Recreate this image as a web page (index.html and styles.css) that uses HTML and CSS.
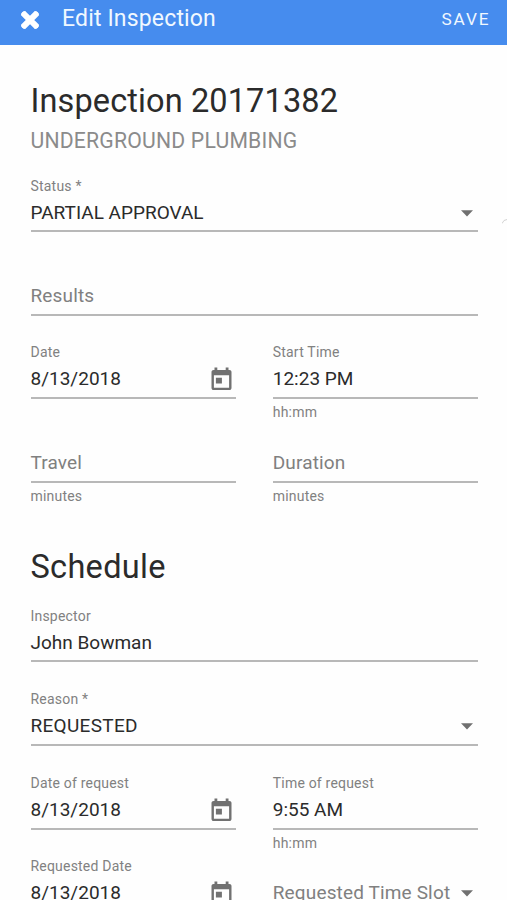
FILE: index.html
```html
<!DOCTYPE html>
<html lang="en">
<head>
<meta charset="utf-8">
<title>Edit Inspection</title>
<link rel="stylesheet" href="styles.css">
</head>
<body>
<svg class="defs" width="0" height="0" aria-hidden="true">
  <symbol id="calendar" viewBox="0 0 21 24"><path fill-rule="evenodd" d="M3.500 .5h2.800V3h8.400V.5h2.800V3h.9c1.300 0 2.100.9 2.100 2.100v15.900c0 1.200-.9 2.100-2.100 2.100H2.600C1.400 23.100.5 22.200.5 21V5.100C.5 3.900 1.400 3 2.600 3h.9zM2.900 8.200v12.500h15.200V8.200zM4.900 10.700h6v5.800h-6z"/></symbol>
  <symbol id="caret" viewBox="0 0 12 7"><path d="M0 .3h12L6 6.500z"/></symbol>
</svg>
<header class="bar">
  <svg class="close" viewBox="0 0 20 20"><path d="M4.300 4.300l11.400 11.400M15.700 4.300L4.300 15.700"/></svg>
  <span class="bar-title">Edit Inspection</span>
  <span class="save">SAVE</span>
</header>
<main>
  <h1>Inspection 20171382</h1>
  <p class="subtitle">UNDERGROUND PLUMBING</p>
  <section class="form first">
    <div class="field wide"><span class="label low">Status *</span><div class="control low"><span>PARTIAL APPROVAL</span><svg class="caret"><use href="#caret"/></svg></div></div>
    <div class="field wide"><span class="label"></span><div class="control empty"><span>Results</span></div></div>
    <div class="field"><span class="label">Date</span><div class="control"><span>8/13/2018</span><svg class="calendar"><use href="#calendar"/></svg></div></div>
    <div class="field"><span class="label">Start Time</span><div class="control"><span>12:23 PM</span></div><span class="hint">hh:mm</span></div>
    <div class="field"><span class="label"></span><div class="control empty"><span>Travel</span></div><span class="hint">minutes</span></div>
    <div class="field"><span class="label"></span><div class="control empty"><span>Duration</span></div><span class="hint">minutes</span></div>
  </section>
  <h2>Schedule</h2>
  <section class="form">
    <div class="field wide"><span class="label low">Inspector</span><div class="control"><span>John Bowman</span></div></div>
    <div class="field wide"><span class="label low">Reason *</span><div class="control"><span class="reason">REQUESTED</span><svg class="caret"><use href="#caret"/></svg></div></div>
    <div class="field"><span class="label">Date of request</span><div class="control"><span>8/13/2018</span><svg class="calendar"><use href="#calendar"/></svg></div></div>
    <div class="field"><span class="label">Time of request</span><div class="control"><span>9:55 AM</span></div><span class="hint">hh:mm</span></div>
    <div class="field"><span class="label">Requested Date</span><div class="control"><span>8/13/2018</span><svg class="calendar"><use href="#calendar"/></svg></div></div>
    <div class="field"><span class="label"></span><div class="control empty"><span>Requested Time Slot</span><svg class="caret"><use href="#caret"/></svg></div></div>
  </section>
</main>
<svg class="edge-mark" viewBox="0 0 5 6"><path d="M0 5.500L2 2.500L5 1.500"/></svg>
</body>
</html>
```
FILE: styles.css
```css
* { box-sizing: border-box; }
html, body { margin: 0; height: 900px; overflow: hidden; }
body { position: relative; background: #fefefe; font-family: Roboto, "Liberation Sans", sans-serif; color: #2b2b2b; }
.defs { display: block; }
.bar { height: 45px; background: #468cee; color: #f0f8ff; display: flex; align-items: center; padding: 0 16.500px 7px 20px; }
.close { width: 20px; height: 20px; margin-top: 2px; fill: none; stroke: #fff; stroke-width: 6; stroke-linecap: square; stroke-linejoin: round; clip-path: inset(1px round 4px); }
.bar-title { margin-left: 22px; font-size: 23px; line-height: 28px; letter-spacing: .16px; }
.save { margin-left: auto; font-size: 17.200px; letter-spacing: 1.900px; }
main { padding: 35px 29px 0 30.500px; }
h1, h2 { margin: 0; font-weight: 400; font-size: 32.500px; line-height: 42px; letter-spacing: .12px; white-space: nowrap; }
.subtitle { margin: 5px 0 0; font-size: 21.200px; letter-spacing: .2px; line-height: 27px; color: #8b8b8b; white-space: nowrap; }
.form { display: grid; grid-template-columns: 1fr 1fr; column-gap: 37px; grid-auto-rows: 83.600px; }
.first { margin-top: 21px; }
h2 { margin-top: 37px; margin-bottom: 17px; letter-spacing: .3px; }
.field { display: flex; flex-direction: column; }
.wide { grid-column: 1 / -1; }
.label, .hint { font-size: 14px; line-height: 20px; color: #818181; letter-spacing: .2px; white-space: nowrap; }
.label { height: 20px; }
.label.low { padding-top: .5px; }
.hint { margin-top: 3px; }
.control { height: 37px; padding-bottom: .5px; border-bottom: 2px solid #b8b8b8; display: flex; align-items: center; justify-content: space-between; font-size: 19px; line-height: 24px; white-space: nowrap; }
.control.low { padding: 1px 0 0; }
.reason { letter-spacing: .3px; }
.empty { color: #808080; letter-spacing: .15px; }
.control.empty { padding-bottom: 1px; }
.caret { width: 12px; height: 7px; fill: #707070; margin-right: 5px; flex: none; }
.calendar { width: 21px; height: 24px; fill: #717171; margin-right: 4px; flex: none; }
.edge-mark { position: absolute; right: 0; top: 218px; width: 5px; height: 6px; fill: none; stroke: #d2d2d2; stroke-width: 1; }
```
